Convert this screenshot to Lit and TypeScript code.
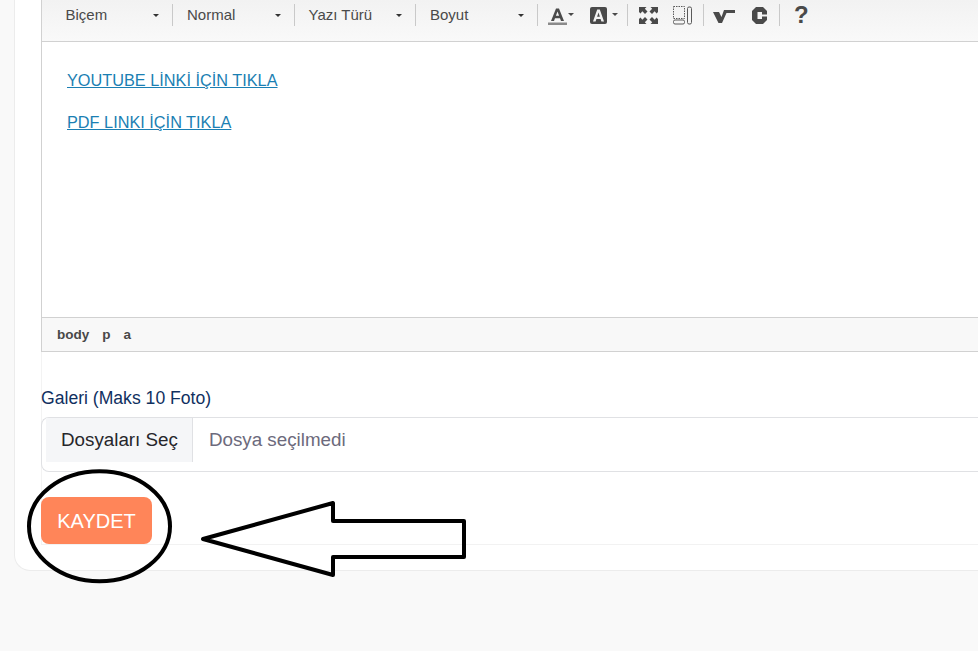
import { LitElement, html, css, svg } from "lit";
import { customElement } from "lit/decorators.js";

const caret = html`<span class="caret"></span>`;
const corner = svg`<path d="M0 3h7.500L5.800 4.800 8.500 7.500 6 10 3.300 7.300 1.500 9.500 0 8z"/>`;

@customElement("app-root")
export class AppRoot extends LitElement {
  static styles = css`
    :host { display: block; height: 651px; overflow: hidden; position: relative; background: #f9f9f9; font-family: "Liberation Sans", Arial, sans-serif; }
    .card { margin-left: 14px; height: 571px; box-sizing: border-box; background: #fff; border: 1px solid #ececec; border-top: 0; border-right: 0; border-bottom-left-radius: 16px; padding-left: 26px; display: flex; flex-direction: column; }
    .editor { border-left: 1px solid #d1d1d1; display: flex; flex-direction: column; }
    .toolbar { height: 41px; border-bottom: 1px solid #d1d1d1; background: linear-gradient(#f2f2f2, #f9f9f9); display: flex; align-items: flex-start; padding-left: 9.5px; color: #4a4a4a; }
    .combo { width: 120.5px; height: 22px; margin-top: 4px; display: flex; align-items: center; justify-content: space-between; padding: 0 13px 0 14px; box-sizing: border-box; font-size: 15px; line-height: 22px; flex: none; }
    .caret { width: 0; height: 0; border: 3px solid transparent; border-top-color: #333; border-bottom: 0; flex: none; }
    .sep { width: 1px; height: 22px; margin-top: 4px; background: #c9c9c9; flex: none; }
    .icons { display: flex; align-items: center; height: 22px; margin-top: 4px; }
    .icons svg { display: block; flex: none; }
    .i1 { margin-left: 10.5px; }
    .i2 { margin-left: 16px; }
    .s1 { margin-left: 9px; }
    .i3 { margin-left: 11px; }
    .i4 { margin-left: 15px; }
    .s2 { margin-left: 11px; }
    .i5 { margin-left: 9px; }
    .i6 { margin-left: 17px; }
    .s3 { margin-left: 12px; }
    .help { font-size: 24px; font-weight: 700; color: #4a4a4a; margin: 4px 0 0 14px; line-height: 22px; height: 26px; }
    .content { height: 275px; box-sizing: border-box; padding: 28px 0 0 25px; font-size: 16.3px; line-height: 20px; }
    .content p { margin: 0 0 22px; }
    .content a { color: #1b7fb3; text-decoration: underline; }
    .path { height: 33px; border-top: 1px solid #d1d1d1; border-bottom: 1px solid #d1d1d1; background: #f8f8f8; display: flex; align-items: center; gap: 13px; padding-left: 15px; font-size: 13.5px; font-weight: 700; color: #484848; }
    .form { box-shadow: inset 1px 0 0 #f3f3f3; display: flex; flex-direction: column; }
    .label { margin-top: 36px; height: 20px; font-size: 17.6px; line-height: 20px; color: #10305f; }
    .file { margin-top: 9px; height: 55px; box-sizing: border-box; border: 1px solid #e0e1e4; border-right: 0; border-radius: 8px 0 0 8px; padding-left: 4px; display: flex; align-items: flex-start; font-size: 18.8px; background: #fff; }
    .choose { height: 44px; box-sizing: border-box; padding: 0 14px 0 15px; background: #f5f6f8; border-right: 1px solid #e0e1e4; color: #26262b; display: flex; align-items: center; }
    .none { height: 44px; display: flex; align-items: center; margin-left: 16px; color: #6c6a7c; }
    .actions { margin-top: 25px; height: 48px; display: flex; border-bottom: 1px solid #f2f2f2; box-sizing: border-box; }
    .save { width: 111px; height: 47px; box-sizing: border-box; border: 0; border-radius: 8px; background: #ff8559; color: #fff; font: 20px "Liberation Sans", Arial, sans-serif; padding: 1px 0 0; }
    .marks { position: absolute; left: 0; top: 0; pointer-events: none; }
  `;

  render() {
    return html`
      <div class="card">
        <div class="editor">
          <div class="toolbar">
            <div class="combo">Biçem ${caret}</div><div class="sep"></div>
            <div class="combo">Normal ${caret}</div><div class="sep"></div>
            <div class="combo">Yazı Türü ${caret}</div><div class="sep"></div>
            <div class="combo">Boyut ${caret}</div><div class="sep"></div>
            <div class="icons">
              <svg class="i1" width="26" height="22" viewBox="0 0 26 22" fill="#4a4a4a">
                <path fill-rule="evenodd" d="M3 17 8 4.500h3L16 17h-3l-1-2.800H7L6 17zM7.900 11.800h3.200L9.500 7.600z"/>
                <rect x="0" y="18.500" width="19" height="2.500" fill="#8a8a8a"/>
                <path d="M20 9h6l-3 3z"/>
              </svg>
              <svg class="i2" width="28" height="22" viewBox="0 0 28 22">
                <rect x="0" y="3" width="17" height="17" rx="2" fill="#4a4a4a"/>
                <path fill-rule="evenodd" d="M3 17.500 7.200 5.500h2.600L14 17.500h-2.600l-.8-2.500H6.400l-.8 2.500zM7.100 12.700h2.800L8.500 8.600z" fill="#f2f2f2"/>
                <path d="M22 9h6l-3 3z" fill="#4a4a4a"/>
              </svg>
            </div>
            <div class="sep s1"></div>
            <div class="icons">
              <svg class="i3" width="19" height="22" viewBox="0 0 19 22" fill="#4a4a4a">
                ${corner}
                <g transform="matrix(-1 0 0 1 19 0)">${corner}</g>
                <g transform="matrix(1 0 0 -1 0 23)">${corner}</g>
                <g transform="matrix(-1 0 0 -1 19 23)">${corner}</g>
              </svg>
              <svg class="i4" width="19" height="22" viewBox="0 0 19 22" fill="none" stroke="#5a5a5a">
                <rect x="0.500" y="2.500" width="11" height="12" stroke-dasharray="1.500 1"/>
                <rect x="0.500" y="16" width="11" height="4" rx="1.500"/>
                <rect x="14.500" y="3" width="4" height="17" rx="1.500"/>
              </svg>
            </div>
            <div class="sep s2"></div>
            <div class="icons">
              <svg class="i5" width="22" height="22" viewBox="0 0 22 22" fill="#4a4a4a">
                <path d="M0 8h6l2.500 5L11 6h11v3H13.500L9 19H5.500z"/>
              </svg>
              <svg class="i6" width="15" height="22" viewBox="0 0 15 22" fill="#4a4a4a">
                <path d="M4 3h7l4 4v3.500h-5V8H5.500v7H10v-2.500h5V16l-4 4H4l-4-4V7z"/>
              </svg>
            </div>
            <div class="sep s3"></div>
            <span class="help">?</span>
          </div>
          <div class="content">
            <p><a href="#">YOUTUBE LİNKİ İÇİN TIKLA</a></p>
            <p><a href="#">PDF LINKI İÇİN TIKLA</a></p>
          </div>
          <div class="path"><span>body</span><span>p</span><span>a</span></div>
        </div>
        <div class="form">
          <div class="label">Galeri (Maks 10 Foto)</div>
          <div class="file">
            <div class="choose">Dosyaları Seç</div>
            <div class="none">Dosya seçilmedi</div>
          </div>
          <div class="actions"><button class="save">KAYDET</button></div>
        </div>
      </div>
      <svg class="marks" width="978" height="651" viewBox="0 0 978 651" fill="none" stroke="#000" stroke-width="4">
        ${svg`<ellipse cx="99.500" cy="526.300" rx="70.500" ry="55"/>`}
        ${svg`<path d="M203 539 333 503V521H464V557H333V575z" stroke-linejoin="round"/>`}
      </svg>
    `;
  }
}
